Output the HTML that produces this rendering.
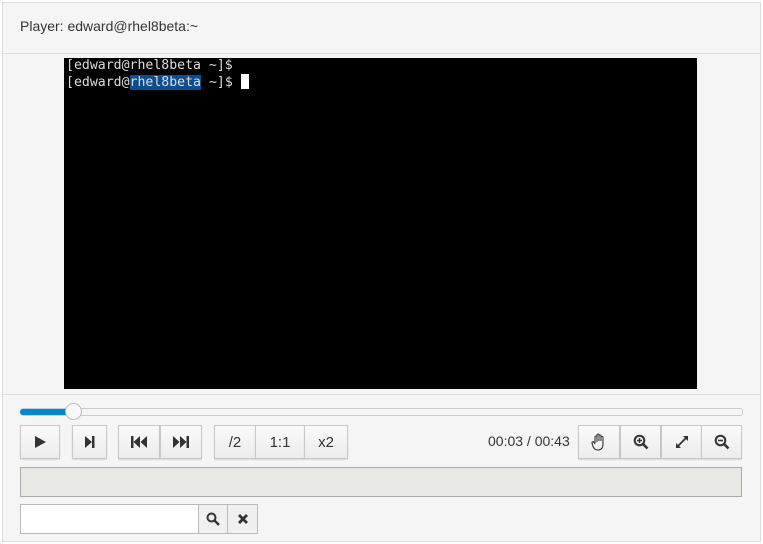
<!DOCTYPE html>
<html><head><style>
body{margin:0;width:763px;height:544px;background:#fff;font-family:"Liberation Sans",sans-serif;position:relative;overflow:hidden}
.a{position:absolute}
.panel{left:2px;top:2px;width:757px;height:538px;border:1px solid #ddd;background:#f5f5f5}
.hdr{left:20px;top:18px;font-size:14px;color:#333}
.term{left:64px;top:58px;width:633px;height:331px;background:#000;color:#ddd;font-family:"DejaVu Sans Mono","Liberation Mono",monospace;font-size:13.2px;line-height:16px;padding:0 0 0 2px;box-sizing:border-box;white-space:pre}
.hl{background:#0a4f93}
.cur{display:inline-block;width:8px;height:15px;background:#fff;vertical-align:-3px}
.btn{position:absolute;top:425px;height:34px;border:1px solid #c8c8c8;background:linear-gradient(#fafafa,#ececec);box-shadow:0 1px 1px rgba(0,0,0,.12);box-sizing:border-box;display:flex;align-items:center;justify-content:center;font-size:15px;color:#333}
</style></head><body>
<div class="a panel"></div>
<div class="a" style="left:3px;top:53px;width:757px;border-top:1px solid #ddd"></div>
<div class="a hdr">Player: edward@rhel8beta:~</div>
<div class="a term">[edward@rhel8beta ~]$
[edward@<span class="hl">rhel8beta</span> ~]$ <span class="cur"></span></div>
<div class="a" style="left:3px;top:394px;width:757px;border-top:1px solid #ddd"></div>
<div class="a" style="left:20px;top:408px;width:721px;height:6px;border:1px solid #ccc;border-radius:3px;background:#f5f5f5"></div>
<div class="a" style="left:20px;top:409px;width:54px;height:6px;background:#0088ce;border-radius:3px"></div>
<div class="a" style="left:65px;top:403px;width:17px;height:17px;border-radius:50%;border:1px solid #bbb;background:#f8f8f8;box-sizing:border-box"></div>
<div class="btn" style="left:20px;width:40px"><svg width="14" height="14"><path d="M2 1L13 7L2 13Z" fill="#333"/></svg></div>
<div class="btn" style="left:72px;width:35px"><svg width="12" height="14"><path d="M1 1L8 7L1 13Z" fill="#333"/><rect x="8" y="1" width="2.5" height="12" fill="#333"/></svg></div>
<div class="btn" style="left:118px;width:42px"><svg width="18" height="14"><rect x="1" y="1" width="2.5" height="12" fill="#333"/><path d="M10 1L3.5 7L10 13ZM17 1L10.5 7L17 13Z" fill="#333"/></svg></div>
<div class="btn" style="left:160px;width:42px"><svg width="18" height="14"><path d="M1 1L7.5 7L1 13ZM8 1L14.5 7L8 13Z" fill="#333"/><rect x="14.5" y="1" width="2.5" height="12" fill="#333"/></svg></div>
<div class="btn" style="left:214px;width:42px">/2</div>
<div class="btn" style="left:255px;width:50px">1:1</div>
<div class="btn" style="left:304px;width:44px">x2</div>
<div class="a" style="left:488px;top:433px;font-size:14px;color:#333">00:03 / 00:43</div>
<div class="btn" style="left:578px;width:42px"><svg width="16" height="18" viewBox="0 0 16 18"><path d="M4 10V4a1 1 0 0 1 2 0V9M6 8V2a1 1 0 0 1 2 0V8M8 8V3a1 1 0 0 1 2 0V8M10 8V4.5a1 1 0 0 1 2 0V11c0 4-2 6-5 6S3 16 1.5 12L1 10a1 1 0 0 1 2-.5L4 11" fill="none" stroke="#333" stroke-width="1.1"/></svg></div>
<div class="btn" style="left:620px;width:41px"><svg width="16" height="16"><circle cx="6.5" cy="6.5" r="4.8" fill="none" stroke="#333" stroke-width="2"/><path d="M10 10L14.5 14.5" stroke="#333" stroke-width="2.6"/><path d="M4 6.5H9M6.5 4V9" stroke="#333" stroke-width="1.4"/></svg></div>
<div class="btn" style="left:661px;width:41px"><svg width="14" height="14"><path d="M8 1H13V6ZM6 13H1V8Z" fill="#333"/><path d="M11 3L3 11" stroke="#333" stroke-width="1.8"/></svg></div>
<div class="btn" style="left:701px;width:41px"><svg width="16" height="16"><circle cx="6.5" cy="6.5" r="4.8" fill="none" stroke="#333" stroke-width="2"/><path d="M10 10L14.5 14.5" stroke="#333" stroke-width="2.6"/><path d="M4 6.5H9" stroke="#333" stroke-width="1.6"/></svg></div>
<div class="a" style="left:20px;top:467px;width:722px;height:30px;border:1px solid #aaa;background:#e8e8e4;box-sizing:border-box"></div>
<div class="a" style="left:20px;top:504px;width:179px;height:30px;border:1px solid #bbb;background:#fff;box-sizing:border-box"></div>
<div class="a" style="left:198px;top:504px;width:30px;height:30px;border:1px solid #bbb;background:#f0f0f0;box-sizing:border-box;display:flex;align-items:center;justify-content:center"><svg width="14" height="14"><circle cx="5.5" cy="5.5" r="4" fill="none" stroke="#333" stroke-width="2"/><path d="M8.5 8.5L13 13" stroke="#333" stroke-width="2.4"/></svg></div>
<div class="a" style="left:227px;top:504px;width:31px;height:30px;border:1px solid #bbb;background:#f0f0f0;box-sizing:border-box;display:flex;align-items:center;justify-content:center"><svg width="12" height="12"><path d="M2 2L10 10M10 2L2 10" stroke="#333" stroke-width="2.8"/></svg></div>
</body></html>
